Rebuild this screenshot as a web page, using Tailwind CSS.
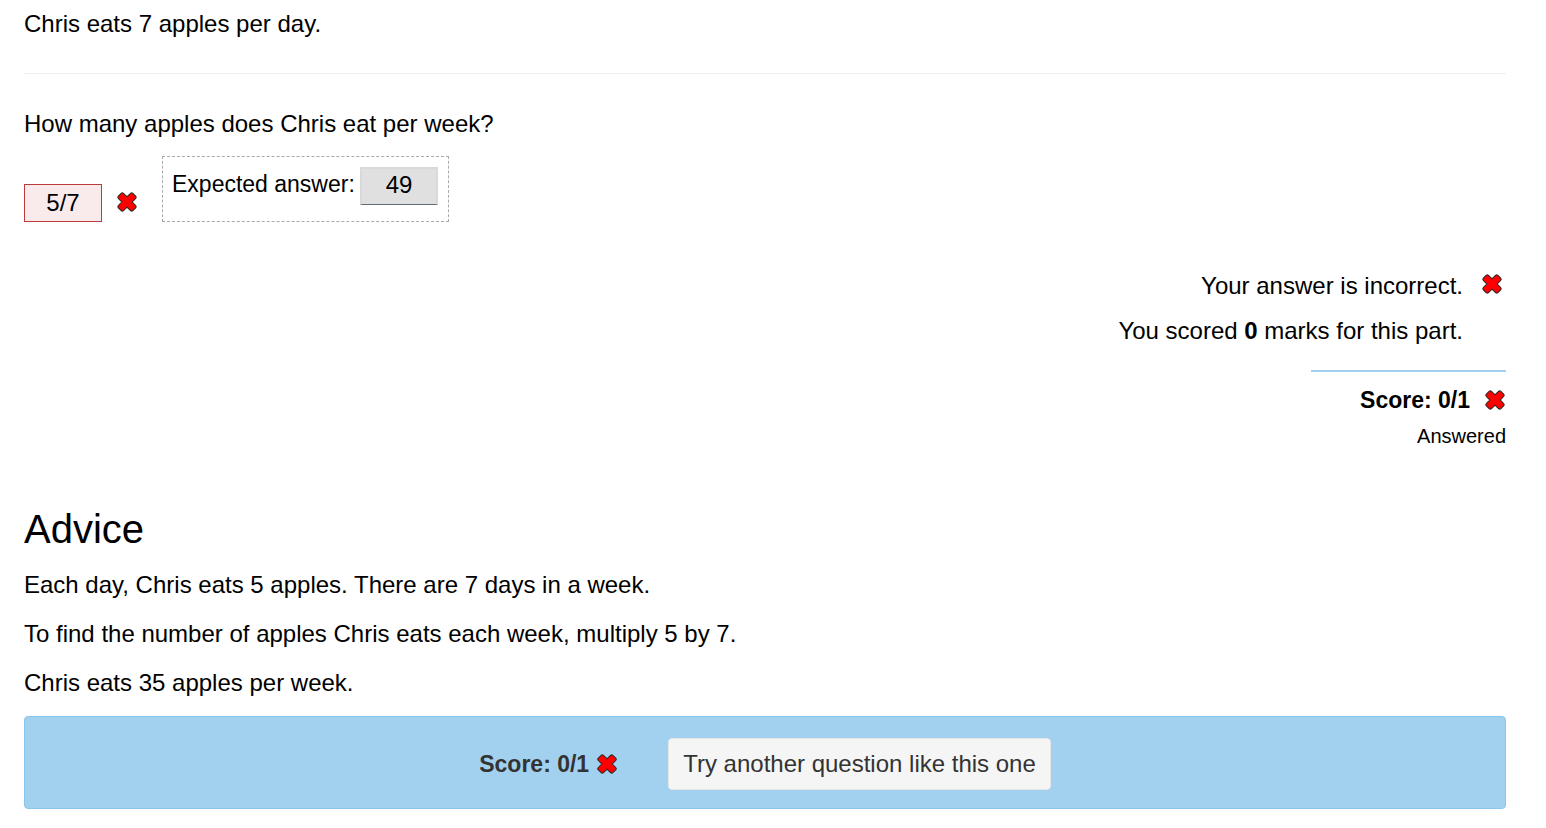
<!DOCTYPE html>
<html lang="en">
<head>
<meta charset="utf-8">
<meta name="viewport" content="width=device-width, initial-scale=1">
<title>Apples per week</title>
<script src="https://cdn.jsdelivr.net/npm/@tailwindcss/browser@4"></script>
</head>
<body class="bg-white text-black">
<svg class="hidden" aria-hidden="true">
  <symbol id="cross" viewBox="0 0 22 22">
    <path d="M6.3 3.5 11 8.1 15.7 3.5 18.5 6.3 13.9 11 18.5 15.7 15.7 18.5 11 13.9 6.3 18.5 3.5 15.7 8.1 11 3.5 6.3Z" fill="#2b2b2b" stroke="#2b2b2b" stroke-width="4.4" stroke-linejoin="round"/>
    <path d="M6.3 3.5 11 8.1 15.7 3.5 18.5 6.3 13.9 11 18.5 15.7 15.7 18.5 11 13.9 6.3 18.5 3.5 15.7 8.1 11 3.5 6.3Z" fill="#ff0000" stroke="#ff0000" stroke-width="2.4" stroke-linejoin="round"/>
  </symbol>
</svg>
<main class="pl-6 pr-10 pt-2 font-['Liberation_Sans',Arial,sans-serif] text-[24px] leading-8">
  <p>Chris eats 7 apples per day.</p>
  <hr class="mt-[33px] border-t border-[#eeeeee]">
  <section class="mt-[34px]">
    <p><label for="answer">How many apples does Chris eat per week?</label></p>
    <div class="mt-4 flex items-end">
      <input id="answer" type="text" value="5/7" class="h-[38px] w-[78px] border border-[#bd3b3b] bg-[#f9ebeb] text-center">
      <svg class="mb-[9px] ml-3.5 size-[22px]" role="img" aria-label="Incorrect"><use href="#cross"/></svg>
      <div class="ml-6 flex h-[66px] items-start border border-dashed border-[#aaaaaa] p-[10px] pl-[9px]">
        <label for="expected" class="w-[188px] whitespace-nowrap text-[23px] leading-[35px]">Expected answer:</label>
        <input id="expected" type="text" value="49" disabled class="h-[38px] w-[78px] border-2 border-b border-[#d9d9d9] border-b-[#5b6d7a] bg-[#e0e0e0] pb-1 text-center text-black">
      </div>
    </div>
    <div class="mt-12 flex items-start justify-end pr-[3px]">
      <div class="text-right">
        <p>Your answer is incorrect.</p>
        <p class="mt-[13px]">You scored <strong>0</strong> marks for this part.</p>
      </div>
      <svg class="ml-[18px] mt-[3px] size-[22px]" role="img" aria-label="Incorrect"><use href="#cross"/></svg>
    </div>
    <div class="ml-auto mt-[23px] w-[195px] border-t-2 border-[#a2d1ef] pt-3 text-right">
      <div class="flex items-center justify-end">
        <strong class="text-[23px]">Score: 0/1</strong>
        <svg class="ml-3.5 size-[22px]" role="img" aria-label="Incorrect"><use href="#cross"/></svg>
      </div>
      <p class="mt-[5px] text-[20px] leading-[30px]">Answered</p>
    </div>
  </section>
  <section class="mt-[54px]">
    <h2 class="text-[40px] leading-[48px]">Advice</h2>
    <div class="mt-4 space-y-[17px]">
      <p>Each day, Chris eats 5 apples. There are 7 days in a week.</p>
      <p>To find the number of apples Chris eats each week, multiply 5 by 7.</p>
      <p>Chris eats 35 apples per week.</p>
    </div>
  </section>
  <footer class="mb-4 mt-[17px] flex h-[93px] items-center justify-center rounded-[4px] border border-[#8bc4ed] bg-[#a2d1ef] pt-[3px] text-[#333333]">
    <strong class="text-[23px]">Score: 0/1</strong>
    <svg class="ml-[7px] size-[22px]" role="img" aria-label="Incorrect"><use href="#cross"/></svg>
    <button type="button" class="ml-[50px] h-[52px] rounded-[4px] border border-[#e6e6e6] bg-[#f5f5f5] px-3.5">Try another question like this one</button>
  </footer>
</main>
</body>
</html>
